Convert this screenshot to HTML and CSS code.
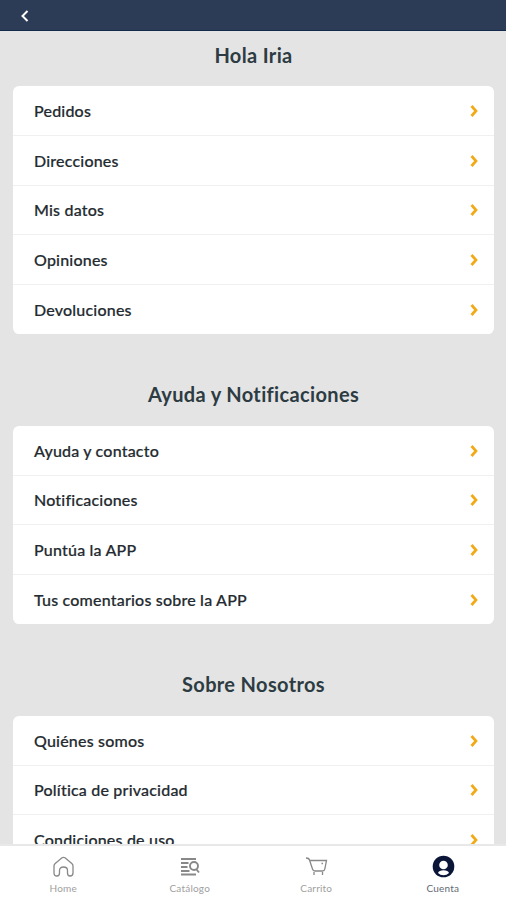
FILE: index.html
```
<!DOCTYPE html>
<html lang="es">
    <head>
        <meta charset="UTF-8" />
        <meta name="viewport" content="width=device-width, initial-scale=1.0" />
        <title>Cuenta</title>
        <link rel="stylesheet" href="styles.css">
    </head>
    <body>
        <div id="app">
            <header class="topbar">
                <svg class="back" viewBox="0 0 12 12"><path d="M8.500 1 3.500 6l5 5" /></svg>
            </header>

            <main class="content">
                <h2>Hola Iria</h2>
                <ul class="menu">
                    <li>Pedidos<svg class="arrow" viewBox="0 0 8 12"><path d="M1.500 1 6 6l-4.500 5" /></svg></li>
                    <li>Direcciones<svg class="arrow" viewBox="0 0 8 12"><path d="M1.500 1 6 6l-4.500 5" /></svg></li>
                    <li>Mis datos<svg class="arrow" viewBox="0 0 8 12"><path d="M1.500 1 6 6l-4.500 5" /></svg></li>
                    <li>Opiniones<svg class="arrow" viewBox="0 0 8 12"><path d="M1.500 1 6 6l-4.500 5" /></svg></li>
                    <li>Devoluciones<svg class="arrow" viewBox="0 0 8 12"><path d="M1.500 1 6 6l-4.500 5" /></svg></li>
                </ul>

                <h2>Ayuda y Notificaciones</h2>
                <ul class="menu">
                    <li>Ayuda y contacto<svg class="arrow" viewBox="0 0 8 12"><path d="M1.500 1 6 6l-4.500 5" /></svg></li>
                    <li>Notificaciones<svg class="arrow" viewBox="0 0 8 12"><path d="M1.500 1 6 6l-4.500 5" /></svg></li>
                    <li>Puntúa la APP<svg class="arrow" viewBox="0 0 8 12"><path d="M1.500 1 6 6l-4.500 5" /></svg></li>
                    <li>Tus comentarios sobre la APP<svg class="arrow" viewBox="0 0 8 12"><path d="M1.500 1 6 6l-4.500 5" /></svg></li>
                </ul>

                <h2>Sobre Nosotros</h2>
                <ul class="menu">
                    <li>Quiénes somos<svg class="arrow" viewBox="0 0 8 12"><path d="M1.500 1 6 6l-4.500 5" /></svg></li>
                    <li>Política de privacidad<svg class="arrow" viewBox="0 0 8 12"><path d="M1.500 1 6 6l-4.500 5" /></svg></li>
                    <li>Condiciones de uso<svg class="arrow" viewBox="0 0 8 12"><path d="M1.500 1 6 6l-4.500 5" /></svg></li>
                </ul>
            </main>

            <nav class="tabs">
                <div class="tab">
                    <svg viewBox="0 0 24 24"><path d="M3 11Q3 9.500 4.200 8.500L11 2.800q1.500-1 3 0l6.800 5.700Q22 9.500 22 11V18q0 3-3 3-2.500 0-2.500-3v-2.500q0-3.500-4-3.500t-4 3.500V18q0 3-2.500 3-3 0-3-3z" /></svg>
                    <span>Home</span>
                </div>
                <div class="tab">
                    <svg class="thick" viewBox="0 0 24 24"><path d="M3 4h15M3 8h7.500M3 12h6.500M3 16h8.500M3 19.500h15M18.500 14.500l2.500 3" /><circle cx="16" cy="11" r="4" /></svg>
                    <span>Catálogo</span>
                </div>
                <div class="tab">
                    <svg viewBox="0 0 24 24"><path d="M2 3q3 0 3.500 2L8.500 14q.5 2 2.500 2h7.500q2 0 2.300-2L22.500 5.500H6M10 17v3M18.500 17v3M17.500 8.500h1.500" /></svg>
                    <span>Carrito</span>
                </div>
                <div class="tab active">
                    <svg viewBox="0 0 24 24"><circle class="disc" cx="12.500" cy="11.500" r="10.800" /><circle class="face" cx="12.500" cy="10" r="4.300" /><path class="face" d="M7 18q1-2.800 5.500-2.800T18 18q-2.200 2.300-5.500 2.300T7 18" /></svg>
                    <span>Cuenta</span>
                </div>
            </nav>
        </div>
    </body>
</html>
```
FILE: styles.css
```
* {
    margin: 0;
    padding: 0;
    box-sizing: border-box;
}

body {
    font-family: Lato, sans-serif;
    font-variant-ligatures: none;
    background-color: #e4e4e4;
}

#app {
    height: 900px;
    display: flex;
    flex-direction: column;
    overflow: hidden;
}

.topbar {
    height: 31px;
    flex: none;
    padding: 10px 19px;
    background-color: #2d3c56;
    border-bottom: 1px solid #142b4b;
}

.back {
    display: block;
    width: 12px;
    height: 12px;
    fill: none;
    stroke: #fff;
    stroke-width: 2;
}

.content {
    flex: 1;
    min-height: 0;
    overflow: hidden;
    padding: 0 12px 0 13px;
}

h2 {
    height: 91.600px;
    padding-top: 36px;
    font-size: 20px;
    line-height: 48px;
    font-weight: 700;
    letter-spacing: 0.350px;
    text-align: center;
    color: #2d3b42;
}

h2:first-child {
    height: 55.400px;
    padding-top: 0;
}

.menu {
    list-style: none;
    background-color: #fff;
    border-radius: 6px;
    overflow: hidden;
}

.menu li {
    height: 49.600px;
    padding: 1px 16px 0 21px;
    display: flex;
    align-items: center;
    justify-content: space-between;
    font-size: 16px;
    line-height: 20px;
    font-weight: 500;
    letter-spacing: 0.200px;
    color: #242b30;
    border-bottom: 1px solid #f0f0f0;
    -webkit-text-stroke: 0.200px #242b30;
}

.menu li:last-child {
    border-bottom-color: #fff;
}

.arrow {
    width: 8px;
    height: 12px;
    fill: none;
    stroke: #f2a916;
    stroke-width: 2.700;
}

.tabs {
    height: 56px;
    flex: none;
    display: flex;
    background-color: #fff;
    border-top: 2px solid #e8e8e8;
}

.tab {
    flex: 1;
    padding-top: 9px;
    display: flex;
    flex-direction: column;
    align-items: center;
    font-size: 10px;
    color: #a0a0a0;
}

.tab svg {
    width: 24px;
    height: 24px;
    fill: none;
    stroke: #888;
    stroke-width: 1.300;
}

.tab svg.thick {
    stroke-width: 1.900;
}

.tab span {
    margin-top: 3px;
    line-height: 12px;
    letter-spacing: 0.200px;
}

.tab.active {
    color: #626a75;
}

.tab .disc {
    fill: #0a1538;
    stroke: none;
}

.tab .face {
    fill: #fff;
    stroke: none;
}
```
